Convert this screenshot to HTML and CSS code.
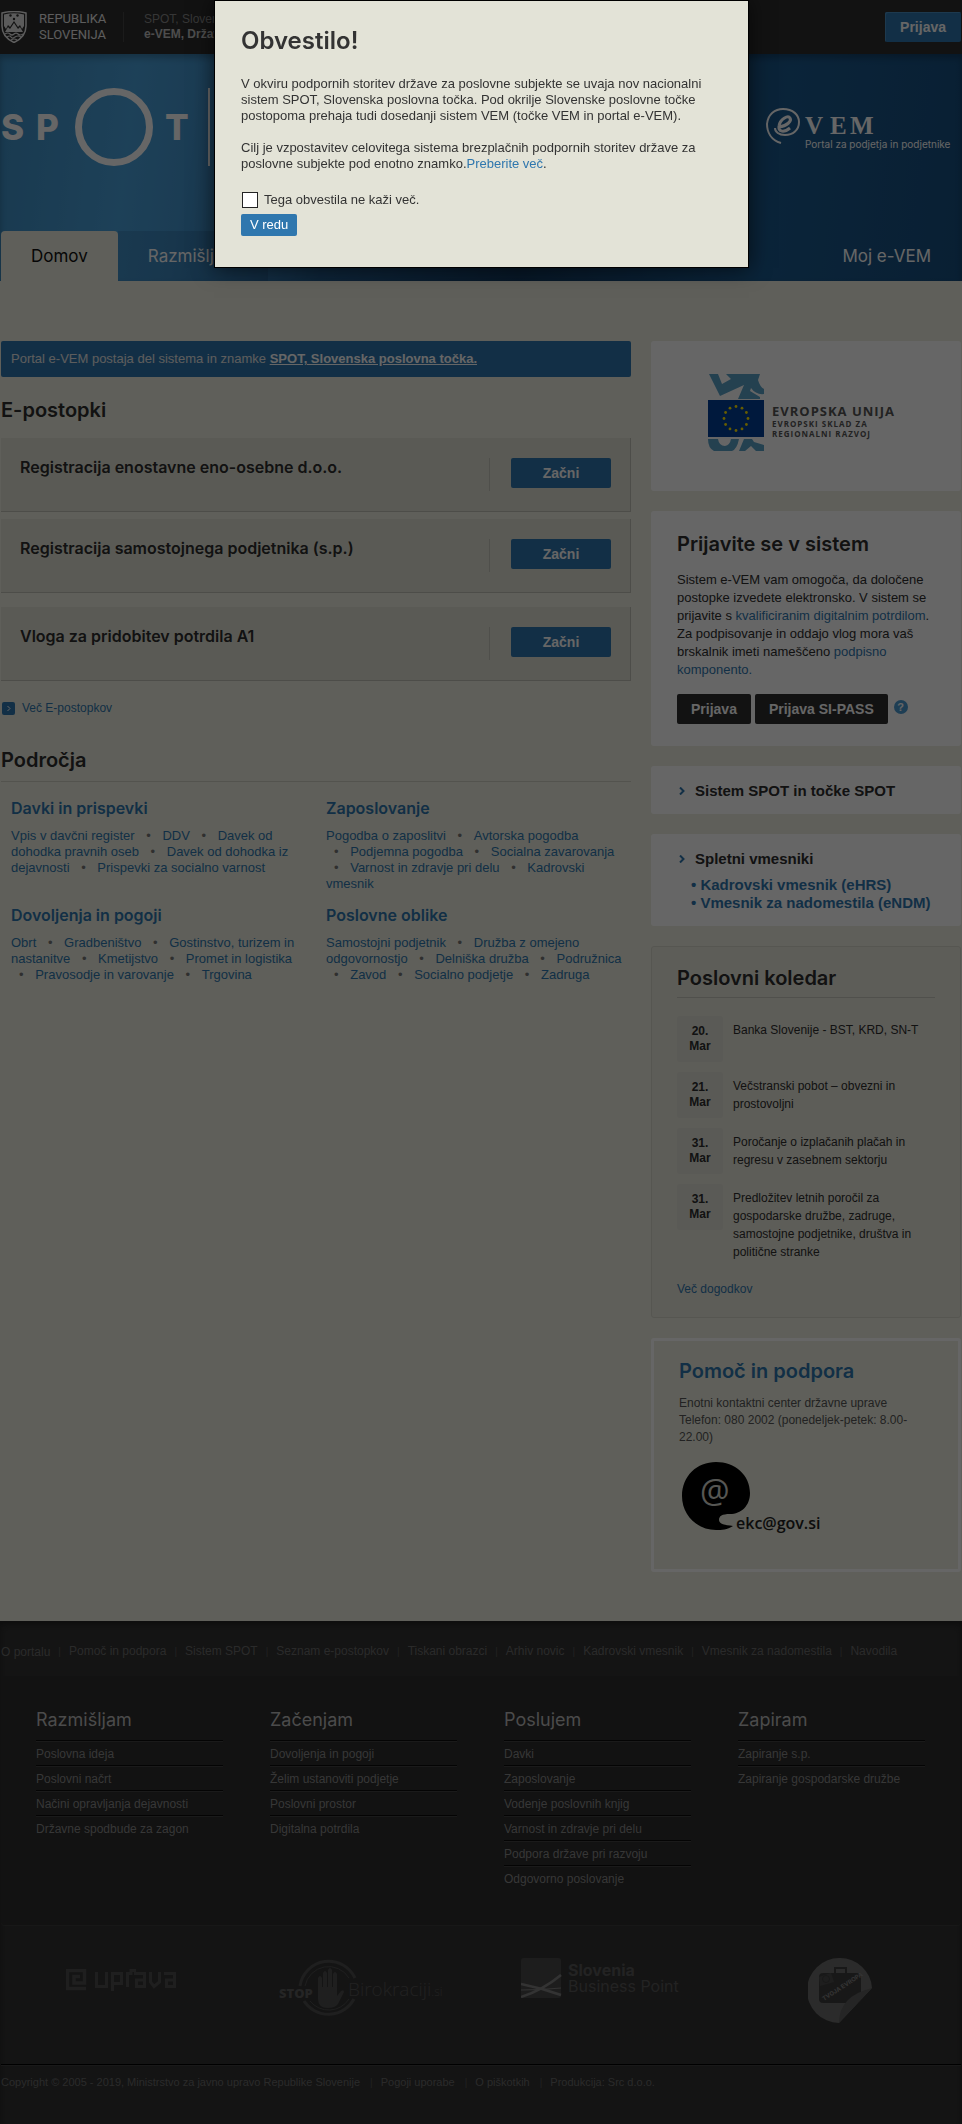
FILE: index.html
```html
<!DOCTYPE html>
<html lang="sl">
<head>
<meta charset="utf-8">
<title>e-VEM</title>
<meta name="viewport" content="width=device-width, initial-scale=1">
<link rel="stylesheet" href="styles.css">
</head>
<body>
<div class="topbar">
  <div class="wrap topbar-row">
    <svg class="emblem" viewBox="0 0 26 32" width="26" height="32" aria-hidden="true">
      <path d="M1 2Q13-1 25 2V15Q25 26 13 31.500Q1 26 1 15Z" fill="#2d2d2d" stroke="#ececec" stroke-width="1.500"/>
      <path d="M3 3.500Q13 1 23 3.500V15L21 18L19 14L17 16L13 10L9 16L7 14L5 18L3 15Z" fill="#e4e4e4"/>
      <g fill="#2d2d2d"><circle cx="9.500" cy="4.500" r="1.200"/><circle cx="16.500" cy="4.500" r="1.200"/><circle cx="13" cy="8" r="1.200"/></g>
      <path d="M4 21l3-5 2 2 4-6 4 6 2-2 3 5z" fill="#e4e4e4"/>
      <path d="M4 23q3-2 5 0t4 0 4 0 5 0M6 26q3-2 4 0t4 0 6 0M10 29q3-2 6 0" fill="none" stroke="#e4e4e4" stroke-width="1.200"/>
    </svg>
    <p class="state">REPUBLIKA<br>SLOVENIJA</p>
    <p class="portal">SPOT, Slovenska poslovna točka<br><strong>e-VEM, Državni portal</strong></p>
    <button class="btn btn-top" type="button">Prijava</button>
  </div>
</div>
<header class="header">
  <div class="wrap header-inner">
    <div class="brands">
      <a class="spot" href="#" aria-label="SPOT">
        <svg viewBox="0 0 212 78" width="212" height="78">
          <g fill="#fff" font-family="Inter, sans-serif" font-weight="800" font-size="35">
            <text x="0" y="52">S</text><text x="35" y="52">P</text><text x="164" y="52">T</text>
          </g>
          <circle cx="113" cy="39" r="35.500" fill="none" stroke="#fff" stroke-width="7"/>
          <path d="M208 0V78" stroke="#fff" stroke-width="2"/>
        </svg>
      </a>
      <a class="evem" href="#" aria-label="e-VEM">
        <svg viewBox="0 0 196 46" width="196" height="46">
          <path d="M16 35C6 32 2 24 2 16C3 6 10 1 18 1C28 1 34 7 34 14C34 22 28 27 20 27C14 27 10 24 10 20" fill="none" stroke="#fff" stroke-width="2"/>
          <path d="M14 19C22 18 27 13 25 10C23 7 15 11 14 18C13 24 19 25 25 20" fill="none" stroke="#fff" stroke-width="3"/>
          <g fill="#fff" font-family="Liberation Serif, serif" font-weight="700" font-size="25">
            <text x="40" y="26">V</text><text x="65" y="26">E</text><text x="85" y="26">M</text>
          </g>
          <text x="40" y="40" fill="#fff" font-family="Inter, sans-serif" font-size="10">Portal za podjetja in podjetnike</text>
        </svg>
      </a>
    </div>
    <nav class="tabs">
      <a class="tab tab-active" href="#">Domov</a>
      <a class="tab" href="#">Razmišljam</a>
      <a class="tab tab-end" href="#">Moj e-VEM</a>
    </nav>
  </div>
</header>

<main class="wrap layout">
  <div class="content">
    <p class="banner">Portal e-VEM postaja del sistema in znamke <a href="#">SPOT, Slovenska poslovna točka.</a></p>
    <h2 class="title">E-postopki</h2>
    <div class="procedures">
      <section class="procedure"><h3>Registracija enostavne eno-osebne d.o.o.</h3><div class="action"><button class="btn btn-start" type="button">Začni</button></div></section>
      <section class="procedure"><h3>Registracija samostojnega podjetnika (s.p.)</h3><div class="action"><button class="btn btn-start" type="button">Začni</button></div></section>
      <section class="procedure procedure-last"><h3>Vloga za pridobitev potrdila A1</h3><div class="action"><button class="btn btn-start" type="button">Začni</button></div></section>
    </div>
    <a class="more" href="#"><svg viewBox="0 0 13 13" width="13" height="13" aria-hidden="true"><rect width="13" height="13" rx="2" fill="#2f77ae"/><path d="M5.500 4L8 6.500 5.500 9" fill="none" stroke="#fff"/></svg>Več E-postopkov</a>
    <h2 class="title title-line">Področja</h2>
    <div class="areas">
      <section class="area"><h3><a href="#">Davki in prispevki</a></h3>
        <p><a href="#">Vpis v davčni register</a> <i>•</i>&nbsp;<a href="#">DDV</a> <i>•</i>&nbsp;<a href="#">Davek od dohodka pravnih oseb</a> <i>•</i>&nbsp;<a href="#">Davek od dohodka iz dejavnosti</a> <i>•</i>&nbsp;<a href="#">Prispevki za socialno varnost</a></p></section>
      <section class="area"><h3><a href="#">Zaposlovanje</a></h3>
        <p><a href="#">Pogodba o zaposlitvi</a> <i>•</i>&nbsp;<a href="#">Avtorska pogodba</a> <i>•</i>&nbsp;<a href="#">Podjemna pogodba</a> <i>•</i>&nbsp;<a href="#">Socialna zavarovanja</a> <i>•</i>&nbsp;<a href="#">Varnost in zdravje pri delu</a> <i>•</i>&nbsp;<a href="#">Kadrovski vmesnik</a></p></section>
      <section class="area"><h3><a href="#">Dovoljenja in pogoji</a></h3>
        <p><a href="#">Obrt</a> <i>•</i>&nbsp;<a href="#">Gradbeništvo</a> <i>•</i>&nbsp;<a href="#">Gostinstvo, turizem in nastanitve</a> <i>•</i>&nbsp;<a href="#">Kmetijstvo</a> <i>•</i>&nbsp;<a href="#">Promet in logistika</a> <i>•</i>&nbsp;<a href="#">Pravosodje in varovanje</a> <i>•</i>&nbsp;<a href="#">Trgovina</a></p></section>
      <section class="area"><h3><a href="#">Poslovne oblike</a></h3>
        <p><a href="#">Samostojni podjetnik</a> <i>•</i>&nbsp;<a href="#">Družba z omejeno odgovornostjo</a> <i>•</i>&nbsp;<a href="#">Delniška družba</a> <i>•</i>&nbsp;<a href="#">Podružnica</a> <i>•</i>&nbsp;<a href="#">Zavod</a> <i>•</i>&nbsp;<a href="#">Socialno podjetje</a> <i>•</i>&nbsp;<a href="#">Zadruga</a></p></section>
    </div>
  </div>

  <aside class="sidebar">
    <a class="card card-eu" href="#" aria-label="Evropska unija">
      <svg viewBox="0 0 196 78" width="196" height="78">
        <g fill="#5ba3c9">
          <path d="M1 0H10L14 10L23 5L18 0H52L50 6Q52 13 56 15V20Q48 21 43 14L42 17L52 23V25H30L36 11L12 22Z"/>
          <path d="M0 65H10Q11 72 17 72Q22 71 23 65H31Q29 75 24 77H6Q0 74 0 65ZM36 65H44L46 68L56 71V77H48L43 72L37 77H31Z"/>
        </g>
        <rect y="26" width="56" height="37" fill="#003f98"/>
        <g fill="#ffe600">
          <circle cx="28" cy="32.500" r="1.400"/><circle cx="34" cy="34.200" r="1.400"/><circle cx="38.400" cy="38.500" r="1.400"/><circle cx="40" cy="44.500" r="1.400"/><circle cx="38.400" cy="50.500" r="1.400"/><circle cx="34" cy="54.900" r="1.400"/><circle cx="28" cy="56.500" r="1.400"/><circle cx="22" cy="54.900" r="1.400"/><circle cx="17.600" cy="50.500" r="1.400"/><circle cx="16" cy="44.500" r="1.400"/><circle cx="17.600" cy="38.500" r="1.400"/><circle cx="22" cy="34.200" r="1.400"/>
        </g>
        <g class="eu-text"><text class="eu-big" x="64" y="42">EVROPSKA UNIJA</text><text x="64" y="53">EVROPSKI SKLAD ZA</text><text x="64" y="63">REGIONALNI RAZVOJ</text></g>
      </svg>
    </a>
    <section class="card card-login">
      <h2>Prijavite se v sistem</h2>
      <p>Sistem e-VEM vam omogoča, da določene postopke izvedete elektronsko. V sistem se prijavite s <a href="#">kvalificiranim digitalnim potrdilom</a>. Za podpisovanje in oddajo vlog mora vaš brskalnik imeti nameščeno <a href="#">podpisno komponento.</a></p>
      <div class="login-row">
        <button class="btn btn-dark" type="button">Prijava</button>
        <button class="btn btn-dark" type="button">Prijava SI-PASS</button>
        <a class="help" href="#">?</a>
      </div>
    </section>
    <section class="card card-link">
      <h3><a href="#"><svg viewBox="0 0 6 8" width="6" height="8" aria-hidden="true"><path d="M1 0.500L4.500 4 1 7.500" fill="none" stroke="#2f77ae" stroke-width="2"/></svg>Sistem SPOT in točke SPOT</a></h3>
    </section>
    <section class="card card-link">
      <h3><a href="#"><svg viewBox="0 0 6 8" width="6" height="8" aria-hidden="true"><path d="M1 0.500L4.500 4 1 7.500" fill="none" stroke="#2f77ae" stroke-width="2"/></svg>Spletni vmesniki</a></h3>
      <ul>
        <li><a href="#">• Kadrovski vmesnik (eHRS)</a></li>
        <li><a href="#">• Vmesnik za nadomestila (eNDM)</a></li>
      </ul>
    </section>
    <section class="calendar">
      <h2>Poslovni koledar</h2>
      <ul>
        <li><time>20.<br>Mar</time><p>Banka Slovenije - BST, KRD, SN-T</p></li>
        <li><time>21.<br>Mar</time><p>Večstranski pobot – obvezni in prostovoljni</p></li>
        <li><time>31.<br>Mar</time><p>Poročanje o izplačanih plačah in regresu v zasebnem sektorju</p></li>
        <li><time>31.<br>Mar</time><p>Predložitev letnih poročil za gospodarske družbe, zadruge, samostojne podjetnike, društva in politične stranke</p></li>
      </ul>
      <a href="#">Več dogodkov</a>
    </section>
    <section class="support">
      <h2><a href="#">Pomoč in podpora</a></h2>
      <p>Enotni kontaktni center državne uprave<br>Telefon: 080 2002 (ponedeljek-petek: 8.00-22.00)</p>
      <a class="mail" href="#" aria-label="ekc@gov.si">
        <svg viewBox="0 0 146 74" width="146" height="74">
          <path d="M36 1C55 1 70 14 70 32C70 45 61 53 50 53C42 53 39 55 39 59C39 63 45 64 53 65C47 69 42 69 36 69C17 69 2 54 2 35C2 15 17 1 36 1Z" fill="#000"/>
          <text x="20" y="42" fill="#d8d8d0" font-family="Open Sans, sans-serif" font-size="33">@</text>
          <text x="56" y="68" fill="#222" font-family="Open Sans, sans-serif" font-weight="600" font-size="16">ekc@gov.si</text>
        </svg>
      </a>
    </section>
  </aside>
</main>

<footer class="footer">
  <div class="wrap">
    <nav class="foot-nav"><a href="#">O portalu</a><a href="#">Pomoč in podpora</a><a href="#">Sistem SPOT</a><a href="#">Seznam e-postopkov</a><a href="#">Tiskani obrazci</a><a href="#">Arhiv novic</a><a href="#">Kadrovski vmesnik</a><a href="#">Vmesnik za nadomestila</a><a href="#">Navodila</a></nav>
    <div class="foot-cols">
      <section><h3>Razmišljam</h3><ul><li><a href="#">Poslovna ideja</a></li><li><a href="#">Poslovni načrt</a></li><li><a href="#">Načini opravljanja dejavnosti</a></li><li><a href="#">Državne spodbude za zagon</a></li></ul></section>
      <section><h3>Začenjam</h3><ul><li><a href="#">Dovoljenja in pogoji</a></li><li><a href="#">Želim ustanoviti podjetje</a></li><li><a href="#">Poslovni prostor</a></li><li><a href="#">Digitalna potrdila</a></li></ul></section>
      <section><h3>Poslujem</h3><ul><li><a href="#">Davki</a></li><li><a href="#">Zaposlovanje</a></li><li><a href="#">Vodenje poslovnih knjig</a></li><li><a href="#">Varnost in zdravje pri delu</a></li><li><a href="#">Podpora države pri razvoju</a></li><li><a href="#">Odgovorno poslovanje</a></li></ul></section>
      <section><h3>Zapiram</h3><ul><li><a href="#">Zapiranje s.p.</a></li><li><a href="#">Zapiranje gospodarske družbe</a></li></ul></section>
    </div>
    <div class="partners">
      <a href="#" class="partner-uprava" aria-label="e-uprava"><svg viewBox="0 0 111 22" width="111" height="22">
        <g fill="none" stroke="#4e4e4e" stroke-width="3">
          <path d="M20 19.500H1.500V1.500H18.500V14H8V7.500H14" stroke-width="3.500"/>
          <path d="M30.500 3V17.500H40.500V3M46.500 22V4.500H55.500V14.500H46M61.500 18V4.500H65V1.500H70M68 4.500H78.500V17.500H70.500V11H78M84.500 3V13L88 17.500L93.500 13V3M98 4.500H108.500V17.500H100.500V11H108"/>
        </g></svg></a>
      <a href="#" aria-label="Stop birokraciji"><svg viewBox="0 0 172 60" width="172" height="60">
        <g fill="none" stroke="#4e4e4e"><path d="M21 28A29 29 0 0 1 76 20M25 43A29 29 0 0 0 75 41" stroke-width="3"/><path d="M26 28A24 24 0 0 1 70 20M31 43A24 24 0 0 0 70 41"/></g>
        <path d="M39 20q2-4 4 0v9h1V15q2-4 4 0v14h1V12q2-4 4 0v17h1V16q2-4 4 0v22l4-5q3-2 3 1l-6 12q-3 4-10 4-10 0-10-9z" fill="#4e4e4e"/>
        <text x="0" y="40" fill="#5c5c5c" font-family="Open Sans, sans-serif" font-weight="800" font-size="13">STOP</text>
        <text x="69" y="38" fill="#555" font-family="Open Sans, sans-serif" font-weight="300" font-size="19">Birokraciji<tspan font-size="12">.si</tspan></text>
      </svg></a>
      <a href="#" aria-label="Slovenia Business Point"><svg viewBox="0 0 164 40" width="164" height="40">
        <rect width="40" height="40" rx="3" fill="#4a4a4a"/>
        <path d="M0 26Q20 30 40 37M0 39Q22 32 40 17" fill="none" stroke="#808080" stroke-width="2.500"/><path d="M0 32Q20 32 40 30" fill="none" stroke="#808080"/>
        <g fill="#585858" font-family="Inter, sans-serif" font-size="16"><text x="47" y="18" font-weight="700">Slovenia</text><text x="47" y="34">Business Point</text></g>
      </svg></a>
      <a href="#" class="partner-europe" aria-label="Tvoja Evropa"><svg viewBox="0 0 64 65" width="64" height="65">
        <path d="M32 0A32 32 0 0 1 64 30L31 65A32 32 0 0 1 32 0Z" fill="#6c6c6c"/>
        <rect x="11" y="15" width="42" height="30" rx="4" fill="#3e3e3e"/><path d="M27 15V10H38V15" fill="none" stroke="#3e3e3e" stroke-width="2"/>
        <path d="M11 19L23 15L26 24L12 28Z" fill="#4c4c4c"/><circle cx="18" cy="21" r="3.500" fill="none" stroke="#3e3e3e"/>
        <text x="0" y="0" transform="translate(16 43) rotate(-33)" fill="#858585" font-family="Inter, sans-serif" font-weight="700" font-size="6">TVOJA EVROPA</text>
        <path d="M64 30L31 65Q31 38 64 30Z" fill="#5c5c5c"/>
      </svg></a>
    </div>
    <div class="legal"><span>Copyright © 2005 - 2019, Ministrstvo za javno upravo Republike Slovenije</span><a href="#">Pogoji uporabe</a><a href="#">O piškotkih</a><a href="#">Produkcija: Src d.o.o.</a></div>
  </div>
</footer>

<div class="overlay"></div>
<div class="modal" role="dialog" aria-labelledby="notice-title">
  <h2 id="notice-title">Obvestilo!</h2>
  <p>V okviru podpornih storitev države za poslovne subjekte se uvaja nov nacionalni sistem SPOT, Slovenska poslovna točka. Pod okrilje Slovenske poslovne točke postopoma prehaja tudi dosedanji sistem VEM (točke VEM in portal e-VEM).</p>
  <p>Cilj je vzpostavitev celovitega sistema brezplačnih podpornih storitev države za poslovne subjekte pod enotno znamko.<a href="#">Preberite več</a>.</p>
  <div class="check"><input id="hide-notice" type="checkbox"><label for="hide-notice">Tega obvestila ne kaži več.</label></div>
  <button class="btn-ok" type="button">V redu</button>
</div>
</body>
</html>
```
FILE: styles.css
```css
* { box-sizing: border-box; }
body {
  margin: 0;
  background: #edeee0;
  color: #2d2d2d;
  font: 13px/16px "Liberation Sans", Arial, sans-serif;
}
h2, h3, p, ul { margin: 0; padding: 0; }
ul { list-style: none; }
a { color: #2f77ae; text-decoration: none; }
svg { display: block; }
h2, h3 { font-family: Inter, sans-serif; font-weight: 600; }
h2 { font-size: 20px; line-height: 26px; }
.wrap { max-width: 960px; margin: 0 auto; }

.btn {
  height: 30px;
  padding: 0 15px;
  border: 0;
  border-radius: 2px;
  background: #2f77ae;
  color: #fff;
  font: bold 14px/30px "Liberation Sans", Arial, sans-serif;
}
.btn-dark { padding: 0 14px; background: #2d2d2d; }
.btn-start { width: 100px; }
.btn-top { margin-left: auto; box-shadow: inset 1px 1px 0 #4a8fc3; }

.topbar { background: #2d2d2d; color: #fff; height: 54px; }
.topbar-row { display: flex; align-items: center; height: 54px; }
.state { margin-left: 12px; width: 84px; font: 13px/16px Roboto, sans-serif; color: #e8e8e8; }
.portal { border-left: 1px solid #444; padding-left: 20px; font-size: 12px; line-height: 15px; color: #888; }
.portal strong { color: #c0c0c0; }

.header {
  background: linear-gradient(97deg, #3f90c6 0, #4aa2dc 14%, #4598d2 20%, #22598a 35%, #123a60 55%, #1b5a8f 80%, #174f80 100%);
  box-shadow: inset 0 4px 6px rgba(0, 0, 0, .25);
}
.header-inner { display: flex; flex-direction: column; justify-content: space-between; height: 227px; padding-top: 34px; }
.brands { display: flex; justify-content: space-between; }
.evem { margin-top: 20px; }
.tabs { display: flex; }
.tab { height: 50px; padding: 0 30px; font: 400 17px/50px Inter, sans-serif; color: #fff; background: rgba(0, 20, 50, .12); }
.tab-active { background: #edeee0; color: #111; border-radius: 4px 4px 0 0; }
.tab-end { flex: 1; text-align: right; background: none; }

.layout { display: grid; grid-template-columns: minmax(0, 630px) minmax(0, 310px); gap: 20px; padding: 60px 0 49px; }
.banner { padding: 10px; background: #2f77ae; color: #e8e8e8; border-radius: 2px; }
.banner a { color: #fff; font-weight: bold; text-decoration: underline; }
.title { padding: 20px 0 15px; }
.procedures { display: flex; flex-direction: column; gap: 7px; }
.procedure {
  display: flex;
  justify-content: space-between;
  height: 74px;
  padding: 20px 19px;
  background: #e2e2d5;
  border: solid #c0c0b6;
  border-width: 0 1px 1px 0;
}
.procedure-last { margin-top: 7px; }
.procedure h3 { font-size: 16px; line-height: 18px; }
.action { height: 33px; padding-left: 21px; border-left: 1px solid #c6c6bb; }
.more { display: flex; align-items: center; gap: 7px; margin: 19px 0 0 1px; font-size: 12px; }
.title-line { padding: 31px 0 8px; border-bottom: 1px solid #cfcfc4; }
.areas { display: grid; grid-template-columns: 1fr 1fr; row-gap: 13px; padding-top: 16px; }
.area { padding: 0 0 0 10px; }
.area:nth-child(odd) { padding-right: 20px; }
.area h3 { font-size: 16px; line-height: 20px; margin-bottom: 10px; }
.area p { font-size: 13px; }
.area i { margin: 0 8px; font-style: normal; color: #777; }

.sidebar { display: flex; flex-direction: column; gap: 20px; }
.card { background: #fff; border-radius: 3px; }
.card-eu { height: 150px; padding: 33px 57px; }
.eu-text { fill: #555; font: bold 8px "Open Sans", sans-serif; letter-spacing: 1px; }
.eu-big { font-size: 13px; }
.card-login { padding: 20px 20px 22px 26px; }
.card-login h2 { margin-bottom: 14px; }
.card-login p { line-height: 18px; }
.login-row { display: flex; gap: 4px; padding: 15px 0 0; }
.help { width: 14px; height: 14px; margin: 6px 0 0 2px; border-radius: 50%; background: #4d9bd3; color: #fff; font: bold 11px/14px "Liberation Sans", sans-serif; text-align: center; }
.card-link { padding: 16px 20px 14px 28px; }
.card-link h3, .card-link ul { font: bold 15px/18px "Liberation Sans", Arial, sans-serif; }
.card-link h3 a { display: flex; align-items: center; gap: 10px; color: #2d2d2d; }
.card-link ul { margin: 8px 0 0 12px; }
.calendar { padding: 18px 25px 20px; background: #e9e8dc; border: 1px solid #d6d6cb; border-radius: 3px; }
.calendar h2 { margin-bottom: 18px; padding-bottom: 6px; border-bottom: 1px solid #c8c8be; }
.calendar ul { display: flex; flex-direction: column; gap: 10px; margin-bottom: 20px; }
.calendar li { display: flex; gap: 10px; min-height: 46px; font-size: 12px; line-height: 18px; }
.calendar time { flex: none; width: 46px; height: 46px; padding: 8px 0; border-radius: 3px; background: #e0e0d6; text-align: center; font-weight: bold; line-height: 15px; }
.calendar p { padding-top: 5px; }
.calendar > a { font-size: 12px; }
.support { padding: 17px 24px 34px 25px; border: 3px solid #fff; border-radius: 3px; }
.support h2 { margin-bottom: 11px; }
.support p { font-size: 12px; line-height: 17px; color: #555; }
.mail { display: block; padding: 15px 0 0 1px; }

.footer { background: #333; font-size: 12px; box-shadow: inset 0 4px 6px #222; }
.foot-nav { display: flex; height: 55px; align-items: center; padding-top: 6px; }
.foot-nav a, .legal a { color: #6a6a6a; }
.foot-nav a + a::before { content: "|"; margin: 0 8px; color: #555; font-size: 10px; }
.foot-cols { display: grid; grid-template-columns: repeat(4, 1fr); column-gap: 47px; height: 250px; padding: 33px 36px 0 35px; background: #2d2d2d; border-bottom: 1px solid #3c3c3c; border-radius: 0 0 4px 4px; }
.foot-cols h3 { padding-bottom: 9px; font-size: 18px; line-height: 22px; font-weight: 400; color: #bbb; }
.foot-cols li { height: 25px; border-top: 1px solid #0c0c0c; box-shadow: inset 0 1px 0 #414141; line-height: 27px; white-space: nowrap; }
.foot-cols a { color: #8a8a8a; }
.partners { display: grid; grid-template-columns: 213px 242px 287px 1fr; height: 139px; padding: 32px 0 0 65px; border-bottom: 1px solid #000; }
.partner-uprava { padding-top: 11px; }
.legal { display: flex; padding: 9px 0 35px; color: #6a6a6a; font-size: 11px; box-shadow: inset 0 1px 0 #404040; }
.legal a::before { content: "|"; margin: 0 8px 0 10px; color: #555; font-size: 10px; }

.overlay { position: fixed; inset: 0; background: rgba(0, 0, 0, .6); }
.modal {
  position: fixed;
  top: 0;
  left: calc(50% - 267px);
  width: 535px;
  min-height: 268px;
  padding: 25px 26px 30px;
  background: #e3e3d7;
  border: 1px solid #000;
  box-shadow: 0 0 20px rgba(0, 0, 0, .6);
  color: #333;
}
.modal h2 { margin-bottom: 20px; font-size: 24px; line-height: 30px; }
.modal p { margin-bottom: 16px; }
.check { display: flex; align-items: center; gap: 6px; height: 20px; margin: 18px 0 4px; }
.check input { appearance: none; width: 16px; height: 16px; margin: 0 0 0 1px; border: 1px solid #222; background: #fff; }
.btn-ok { height: 22px; padding: 0 9px; border: 0; border-radius: 2px; background: #2f77ae; color: #fff; font: 13px/22px "Liberation Sans", Arial, sans-serif; }
```
